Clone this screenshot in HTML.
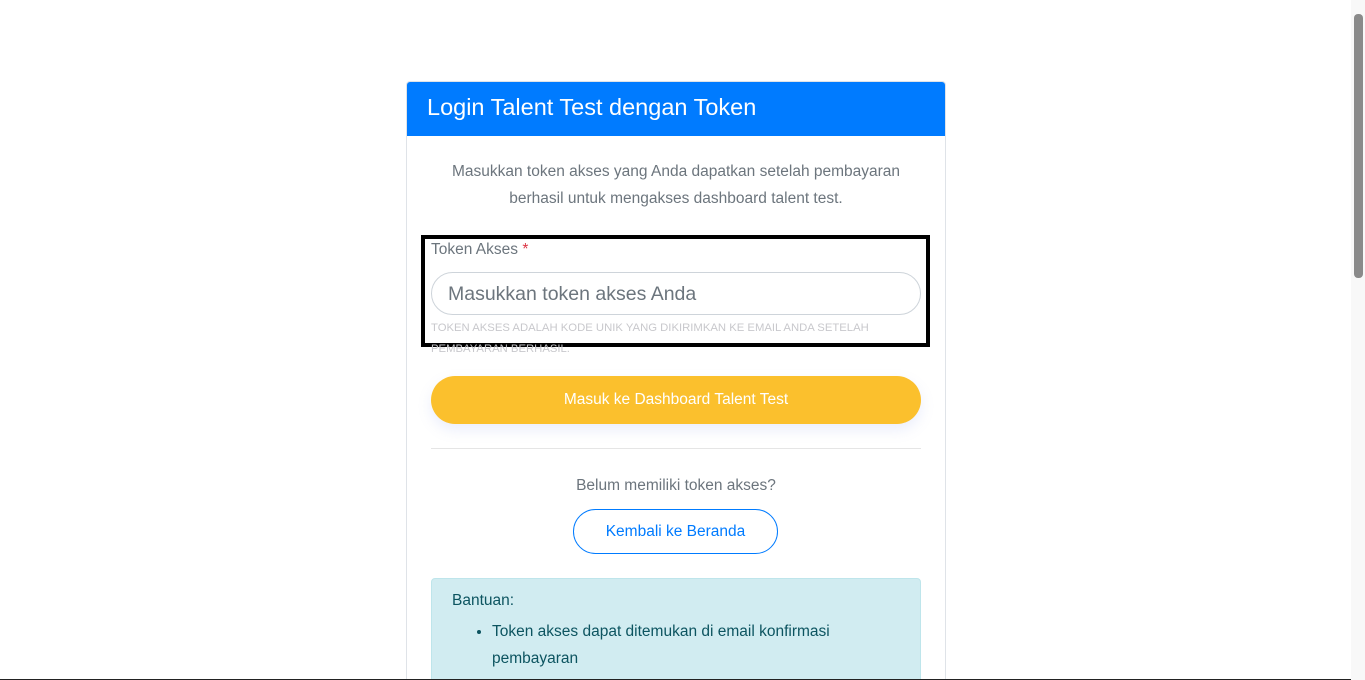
<!DOCTYPE html>
<html style="overflow:hidden;height:680px"><head><meta charset="utf-8"><style>
*{box-sizing:border-box;margin:0;padding:0}
body{width:1365px;height:680px;overflow:hidden;background:#fff;font-family:"Liberation Sans",sans-serif;position:relative}
.a{position:absolute}
.card{left:406px;top:81px;width:540px;height:599px;border:1px solid #dfe3e8;border-bottom:none;border-radius:4px 4px 0 0;overflow:hidden}
.hdr{left:0;top:0;width:540px;height:54px;background:#007bff;color:#fff;font-size:23.5px;padding:12px 0 0 20px}
.c{text-align:center;width:100%;left:0}
</style></head><body>
<div class="a card">
<div class="a hdr">Login Talent Test dengan Token</div>
</div>
<div class="a c" style="left:406px;width:540px;top:158px;font-size:15.5px;line-height:27px;color:#6c757d">Masukkan token akses yang Anda dapatkan setelah pembayaran<br>berhasil untuk mengakses dashboard talent test.</div>
<div class="a" style="left:421px;top:235px;width:509px;height:112px;border:4px solid #000"></div>
<div class="a" style="left:431px;top:241px;font-size:15.5px;color:#6c757d">Token Akses <span style="color:#dc3545">*</span></div>
<div class="a" style="left:431px;top:272px;width:490px;height:43px;border:1px solid #ced4da;border-radius:22px;font-size:19.5px;color:#6c757d;padding:10px 0 0 16px">Masukkan token akses Anda</div>
<div class="a" style="left:431px;top:318px;font-size:11.3px;line-height:21px;color:#c8c8cc;width:500px">TOKEN AKSES ADALAH KODE UNIK YANG DIKIRIMKAN KE EMAIL ANDA SETELAH<br>PEMBAYARAN BERHASIL.</div>
<div class="a" style="left:431px;top:376px;width:490px;height:48px;border-radius:24px;background:#fbc02d;color:#fff;font-size:15.5px;text-align:center;line-height:48px;box-shadow:0 6px 14px rgba(120,140,230,.15)">Masuk ke Dashboard Talent Test</div>
<div class="a" style="left:431px;top:448px;width:490px;height:1px;background:#e5e5e5"></div>
<div class="a c" style="left:406px;width:540px;top:477px;font-size:15.5px;color:#6c757d">Belum memiliki token akses?</div>
<div class="a" style="left:573px;top:509px;width:205px;height:45px;border:1px solid #007bff;border-radius:23px;color:#007bff;font-size:15.5px;text-align:center;line-height:43px">Kembali ke Beranda</div>
<div class="a" style="left:431px;top:578px;width:490px;height:110px;background:#d1ecf1;border:1px solid #bee5eb;border-radius:4px;color:#0c5460;font-size:15.5px;line-height:27px;padding:8px 20px">Bantuan:
<ul style="padding-left:40px;margin-top:4px"><li>Token akses dapat ditemukan di email konfirmasi pembayaran</li></ul></div>
<div class="a" style="left:1351px;top:0;width:14px;height:680px;background:#f8f8f8"></div>
<div class="a" style="left:1354px;top:14px;width:9px;height:264px;background:#8a8a8a;border-radius:4px"></div>
<div class="a" style="left:0;top:679px;width:1351px;height:1px;background:#222"></div>
</body></html>
